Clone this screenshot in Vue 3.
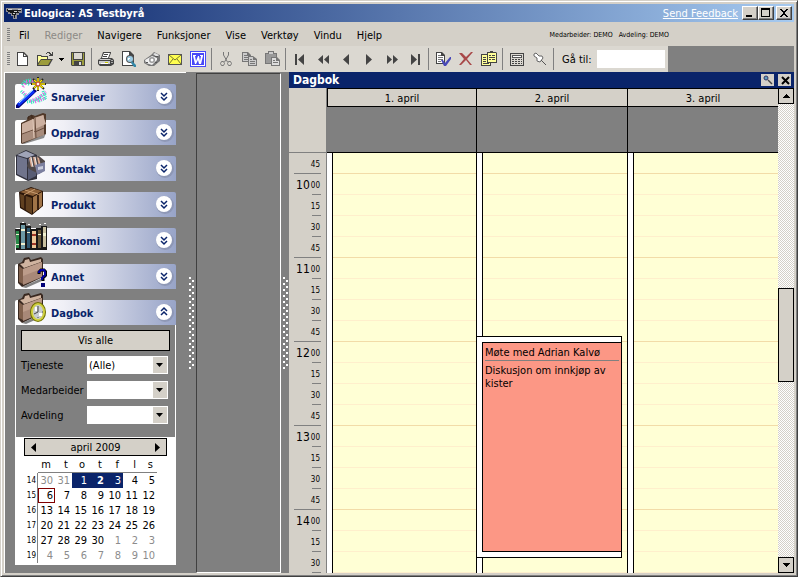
<script setup>
import { ref } from 'vue'

const menus = ['Fil', 'Rediger', 'Navigere', 'Funksjoner', 'Vise', 'Verktøy', 'Vindu', 'Hjelp']

const toolGroups = [
  [{ id: 'new', label: 'Ny' }, { id: 'open', label: 'Åpne' }, { id: 'drop', label: 'Åpne nylige' }, { id: 'save', label: 'Lagre' }],
  [{ id: 'print', label: 'Skriv ut' }, { id: 'preview', label: 'Forhåndsvis' }, { id: 'fax', label: 'Faks' }, { id: 'mail', label: 'E-post' }, { id: 'word', label: 'Word' }],
  [{ id: 'cut', label: 'Klipp ut' }, { id: 'copy', label: 'Kopier' }, { id: 'paste', label: 'Lim inn' }],
  [{ id: 'first', label: 'Første' }, { id: 'rewind', label: 'Spol tilbake' }, { id: 'prev', label: 'Forrige' }, { id: 'next', label: 'Neste' }, { id: 'forward', label: 'Spol frem' }, { id: 'last', label: 'Siste' }],
  [{ id: 'approve', label: 'Godkjenn' }, { id: 'delete', label: 'Slett' }, { id: 'duplicate', label: 'Dupliser' }],
  [{ id: 'calc', label: 'Kalkulator' }, { id: 'pin', label: 'Fest' }],
]

const sections = [
  { id: 'wand', label: 'Snarveier' },
  { id: 'case', label: 'Oppdrag' },
  { id: 'cabinet', label: 'Kontakt' },
  { id: 'box', label: 'Produkt' },
  { id: 'books', label: 'Økonomi' },
  { id: 'folder', label: 'Annet' },
  { id: 'diary', label: 'Dagbok', open: true },
]

const filters = [
  { id: 'tjeneste', label: 'Tjeneste', value: '(Alle)' },
  { id: 'medarbeider', label: 'Medarbeider', value: '' },
  { id: 'avdeling', label: 'Avdeling', value: '' },
]

const weekdays = ['m', 't', 'o', 't', 'f', 'l', 's']
const weeks = [14, 15, 16, 17, 18, 19].map((number, w) => ({
  number,
  days: weekdays.map((_, d) => {
    const n = w * 7 + d - 1
    const out = n < 1 || n > 30
    return {
      text: n < 1 ? 31 + n : n > 30 ? n - 30 : n,
      out,
      selected: n >= 1 && n <= 3,
      bold: n === 2,
      today: n === 6,
    }
  }),
}))

// Quarter-hour slots from 09:45 up to 14:30
const slots = []
for (let q = 39; q < 59; q++) {
  const m = (q % 4) * 15
  slots.push({ hour: m === 0 ? Math.floor(q / 4) : '', minute: m === 0 ? '00' : String(m), last: m === 45 })
}

const days = [
  { label: '1. april', events: [] },
  { label: '2. april', events: [{ start: 183, length: 222, title: 'Møte med Adrian Kalvø', text: 'Diskusjon om innkjøp av kister' }] },
  { label: '3. april', events: [] },
]

const goto = ref('')
</script>

<template>
  <div class="window">
    <header class="titlebar">
      <svg class="app-icon" viewBox="0 0 16 16" aria-hidden="true">
        <path d="M0 3h16v5h-3v2h-2v4H7v-3H5V9H2V7H0z" fill="#8c8c94" />
        <path d="M1 4h5v1h9v1h-3v1h1v1h-3v2H9v3H8v-3H6V8H4V7H2V6H1z" fill="#181818" />
        <path d="M2 4h4v1H2zM8 6h3v1H8zM7 8h2v1H7zM12 4h3v1h-3z" fill="#d0d0d0" />
      </svg>
      <h1>Eulogica: AS Testbyrå</h1>
      <a href="#feedback" class="feedback">Send Feedback</a>
      <div class="win-buttons">
        <button type="button" aria-label="Minimer"><svg viewBox="0 0 12 10"><path d="M2 7h6v2H2z" /></svg></button>
        <button type="button" aria-label="Maksimer"><svg viewBox="0 0 12 10"><path d="M1 0h9v9H1zM2 2v6h7V2z" fill-rule="evenodd" /></svg></button>
        <button type="button" aria-label="Lukk" class="close"><svg viewBox="0 0 12 10"><path d="M2 1h2v1h1v1h2V2h1V1h2v1H9v1H8v1H7v2h1v1h1v1h1v1H8V8H7V7H5v1H4v1H2V8h1V7h1V6h1V4H4V3H3V2H2z" /></svg></button>
      </div>
    </header>

    <nav class="menubar">
      <span class="grip"></span>
      <button v-for="m in menus" :key="m" type="button" :disabled="m === 'Rediger'">{{ m }}</button>
      <p class="status"><span>Medarbeider: DEMO</span><span>Avdeling: DEMO</span></p>
    </nav>

    <div class="toolrow">
      <div class="toolbar">
        <span class="grip"></span>
        <div v-for="(group, g) in toolGroups" :key="g" class="group">
          <button v-for="t in group" :key="t.id" type="button" :class="{ narrow: t.id === 'drop' }" :aria-label="t.label">
            <svg v-if="t.id === 'drop'" class="drop" viewBox="0 0 5 3"><path d="M0 0h5v1H0zM1 1h3v1H1zM2 2h1v1H2z" /></svg>
            <svg v-else class="ico" viewBox="0 0 16 16">
              <g v-if="t.id === 'new'">
                <path d="M3 1h7l4 4v10H3z" fill="#444" /><path d="M4 2h5v4h4v8H4z" fill="#fff" /><path d="M10 3v2h2z" fill="#fff" />
              </g>
              <g v-else-if="t.id === 'open'">
                <path d="M0 4h4l1 1h6v3h5l-4 7H0z" fill="#444" /><path d="M1 5h3v1h6v2H4l-3 4z" fill="#ffff9c" /><path d="M4 9h10l-3 5H1z" fill="#9c9c3c" />
                <path d="M9 2h1V1h3v1h1v1h1V1h1v4h-4V4h1V3h-1V2h-2v1H9z" fill="#444" />
              </g>
              <g v-else-if="t.id === 'save'">
                <path d="M1 1h14v14H2l-1-1z" fill="#444" /><path d="M2 2h1v7h10V2h1v12H2z" fill="#9c9c3c" /><path d="M4 2h8v6H4z" fill="#dbd8d1" /><path d="M4 10h8v4H4z" fill="#444" /><path d="M9 11h2v3H9z" fill="#ddd" />
              </g>
              <g v-else-if="t.id === 'print'">
                <path d="M5 1h8v1l-2 5h3l2 2v4l-3 2H2l-2-2V9l3-2z" fill="#444" /><path d="M6 2h6l-2 5H4z" fill="#fff" /><path d="M6 3h4v1H6zM5 5h4v1H5z" fill="#444" /><path d="M2 8h11l-1 1H1zM1 10h11v3H1z" fill="#ccc" /><path d="M3 12h7v1H3z" fill="#fff" /><path d="M7 11h3v1H7z" fill="#c8c800" /><path d="M13 9h2v1h-2zM13 11h2v1h-2z" fill="#aaa" />
              </g>
              <g v-else-if="t.id === 'preview'">
                <path d="M1 0h8l4 4v11H1z" fill="#444" /><path d="M2 1h6v4h4v9H2z" fill="#fff" /><circle cx="9" cy="8" r="4" fill="#555" /><circle cx="9" cy="8" r="3" fill="#9ccce4" /><path d="M7 7h2v1H8v1H7z" fill="#fff" /><path d="M11 10l4 4v2h-2l-3-4z" fill="#3488a8" />
              </g>
              <g v-else-if="t.id === 'fax'">
                <path d="M0 9l7-5 3-3 6 3v6l-6 5H5l-5-3z" fill="#777" /><path d="M1 9l7-4 5 2v2l-5 5-6-2z" fill="#f0f0f0" /><circle cx="8" cy="9" r="3" fill="#999" /><circle cx="8" cy="9" r="1.500" fill="#fff" /><path d="M9 3l2-1 4 2-2 2z" fill="#e4e4e4" /><path d="M2 11h2v1H2zM11 11h2v1h-2zM11 5h3v1h-3z" fill="#555" />
              </g>
              <g v-else-if="t.id === 'mail'">
                <path d="M1 3h14v11H1z" fill="#555" /><path d="M2 4h12v9H2z" fill="#ffff50" /><path d="M2 4l6 5 6-5M2 13l4-5M14 13l-4-5" fill="none" stroke="#777730" />
              </g>
              <g v-else-if="t.id === 'word'">
                <path d="M0 0h16v16H0z" fill="#4848f8" /><path d="M1 1h14v14H1z" fill="#fff" /><path d="M2 2h12v12H2z" fill="#4848f8" /><path d="M3 4h3v1H5l1 5 2-5h1l1 5 1-5h-1V4h3v1l-2 8H9L8 9l-2 4H5L3 5z" fill="#fff" />
              </g>
              <g v-else-if="t.id === 'cut'" fill="none" stroke="#777" stroke-width="1">
                <path d="M5.500 1v3l4 7M10.500 1v3l-4 7" /><path d="M3.500 10.500h2l1 2-1 2h-2l-1-2zM10.500 10.500h2l1 2-1 2h-2l-1-2z" />
              </g>
              <g v-else-if="t.id === 'copy'">
                <path d="M1 1h6l3 3v7H1z" fill="#777" /><path d="M2 2h4v3h3v5H2z" fill="#ccc" /><path d="M3 4h3v1H3zM3 6h5v1H3zM3 8h5v1H3z" fill="#777" /><path d="M7 5h5l4 3v7H7z" fill="#777" /><path d="M8 6h4v3h3v5H8z" fill="#ccc" /><path d="M9 8h2v1H9zM9 10h5v1H9zM9 12h5v1H9z" fill="#777" />
              </g>
              <g v-else-if="t.id === 'paste'">
                <path d="M1 2h3V0h6v2h3v11H1z" fill="#777" /><path d="M2 3h10v9H2z" fill="#999" /><path d="M5 1h4v2H5z" fill="#ccc" /><path d="M7 6h6l3 3v6H7z" fill="#777" /><path d="M8 7h4v3h3v4H8z" fill="#ddd" /><path d="M9 9h2v1H9zM9 11h5v1H9z" fill="#777" />
              </g>
              <path v-else-if="t.id === 'first'" d="M3 3h2v11H3zM12 3v11L6 8.500z" fill="#444" />
              <path v-else-if="t.id === 'rewind'" d="M8 4v9L3 8.500zM14 4v9L9 8.500z" fill="#444" />
              <path v-else-if="t.id === 'prev'" d="M11 3v11L5 8.500z" fill="#444" />
              <path v-else-if="t.id === 'next'" d="M5 3v11l6-5.500z" fill="#444" />
              <path v-else-if="t.id === 'forward'" d="M3 4v9l5-4.500zM9 4v9l5-4.500z" fill="#444" />
              <path v-else-if="t.id === 'last'" d="M4 3v11l6-5.500zM11 3h2v11h-2z" fill="#444" />
              <g v-else-if="t.id === 'approve'">
                <path d="M1 1h6l3 3v9H1z" fill="#444" /><path d="M2 2h4v3h3v7H2z" fill="#fff" /><path d="M3 4h3v1H3zM3 6h5v1H3zM3 8h5v1H3zM3 10h3v1H3z" fill="#777" /><path d="M6 9h2l2 3 5-6h1v2l-5 7H9z" fill="#4848b8" />
              </g>
              <path v-else-if="t.id === 'delete'" d="M1 2h3l4 4 5-5h2L9 8l5 6h-2L8 9l-5 5H1l5-6z" fill="#a84848" />
              <g v-else-if="t.id === 'duplicate'">
                <path d="M0 3h8l2 2v10H0z" fill="#444" /><path d="M1 4h8v10H1z" fill="#ffff98" /><path d="M6 1h3V0h3v1h3l1 1v10H6z" fill="#444" /><path d="M7 2h8v9H7z" fill="#ffff98" /><path d="M2 6h3v1H2zM2 8h3v1H2zM2 10h3v1H2zM2 12h6v1H2zM8 4h2v1H8zM11 4h3v1h-3zM8 6h6v1H8zM8 8h2v1H8zM11 8h3v1h-3z" fill="#444" />
              </g>
              <g v-else-if="t.id === 'calc'">
                <path d="M1 2h14v13H1z" fill="#444" /><path d="M2 3h12v11H2z" fill="#dbd8d1" /><path d="M3 4h10v3H3z" fill="#555" /><path d="M4 5h8v1H4z" fill="#fff" />
                <path d="M3 8h2v1H3zM6 8h2v1H6zM9 8h2v1H9zM12 8h1v1h-1zM3 10h2v1H3zM6 10h2v1H6zM9 10h2v1H9zM12 10h1v1h-1zM3 12h2v1H3zM6 12h2v1H6zM9 12h2v1H9zM12 12h1v1h-1z" fill="#444" />
              </g>
              <g v-else-if="t.id === 'pin'">
                <path d="M2 3l2-1 3 3 3 0 1 2-3 4-3-1v-3L2 5z" fill="#fff" stroke="#666" /><path d="M9 9l5 5" stroke="#555" fill="none" />
              </g>
            </svg>
          </button>
        </div>
        <label for="goto">Gå til:</label>
        <input id="goto" v-model="goto" type="text">
      </div>
    </div>

    <main class="work">
      <aside class="sidebar">
        <section v-for="s in sections" :key="s.id" class="section">
          <button type="button" class="section-head" :aria-expanded="!!s.open">
            <svg class="pic" viewBox="0 0 32 32" aria-hidden="true">
              <g v-if="s.id === 'wand'">
                <path d="M7 8l3-4 6-1M6 14l4 4 2 5M12 25l8-2 11-7M16 26l10-5M24 24l7-3M10 5l5 3M28 14l3 8" fill="none" stroke="#30e8c0" stroke-width="3" stroke-dasharray="1 1" />
                <path d="M8 10l3-5 7-1M8 15l5 5M15 24l8-3 8-6M20 25l10-4" fill="none" stroke="#f060e8" stroke-width="3" stroke-dasharray="1 2" />
                <path d="M1 28L19 12l3 2L4 31H1z" fill="#000078" /><path d="M3 28L19 14" stroke="#0830f8" stroke-width="3" /><path d="M4 26L18 13" stroke="#a0e8ff" />
                <path d="M23 0v14M16 7h15M18 2l11 10M18 12L28 2" stroke="#222" stroke-width="2" /><path d="M23 1v12M17 7h13M19 3l9 8M19 11l8-8" stroke="#ffe800" stroke-width="1.500" /><circle cx="23" cy="7" r="2" fill="#fff" stroke="#c02020" />
              </g>
              <g v-else-if="s.id === 'case'">
                <path d="M7 30l22-8 2-2-2 5-20 6z" fill="#444" opacity=".6" />
                <path d="M6 10l6-3 1-3 5-2 2 1 8-3 3 1v20L7 31l-1-1z" fill="#503828" />
                <path d="M7 11l22-9v20L7 30z" fill="#a88c7c" />
                <path d="M7 11l11-5v12L7 21zM19 5l9-3 3 9-11 5z" fill="#ccb0a0" />
                <path d="M7 21l11-4 2 2 9-4" fill="none" stroke="#684c3c" /><path d="M18 6l1 19" stroke="#e4ccbc" /><path d="M20 5l1 20" stroke="#684c3c" />
                <path d="M13 6v-2l4-2v3" fill="none" stroke="#382418" />
              </g>
              <g v-else-if="s.id === 'cabinet'">
                <path d="M1 6l10-5 11 5v24l-9 2L1 26z" fill="#30303c" /><path d="M2 6l9-4 9 4-8 3z" fill="#a0a4b8" /><path d="M2 7l10 3v20L2 25z" fill="#70748c" /><path d="M13 10l8-3v20l-8 4z" fill="#585c74" /><path d="M12 17l3-9 9-1 6 5v9l-6 4-10-5z" fill="#504848" /><path d="M14 9l2-1 2 9-2 1zM18 8l2 0 2 9-2 1zM22 8l2 1 2 8h-2z" fill="#d8a890" /><path d="M16 8l2 10M20 8l2 10" stroke="#eee" /><path d="M20 16l10-3v9l-8 4z" fill="#7c80a0" /><path d="M23 18l5-1v3l-5 1z" fill="#c8ccdc" />
              </g>
              <g v-else-if="s.id === 'box'">
                <path d="M4 7l12-5 12 4v15l-11 9L5 23z" fill="#281408" /><path d="M5 7l11-4 11 3-9 5z" fill="#8c6038" /><path d="M5 9l12 4v16L6 22z" fill="#604020" /><path d="M18 12l9-5v14l-9 7z" fill="#a07448" /><path d="M10 5l13 4M20 4L9 10" stroke="#c89c70" /><path d="M10 11v14M23 10v15" stroke="#382010" stroke-width="2" />
              </g>
              <g v-else-if="s.id === 'books'">
                <path d="M0 8h5V2h6v3h5v3h5V7h5V5h6v24H1z" fill="#181818" /><path d="M1 10h3v17H1z" fill="#288848" /><path d="M6 4h4v24H6z" fill="#6c98a4" /><path d="M12 7h3v20h-3z" fill="#305870" /><path d="M17 10h4v17h-4z" fill="#f0c898" /><path d="M23 9h3v18h-3z" fill="#685838" /><path d="M28 6h3v20h-3z" fill="#c8c0a0" /><path d="M1 13h3v1H1zM1 23h3v1H1zM6 8h4v2H6zM6 22h4v2H6zM12 11h3v1h-3zM23 13h3v1h-3zM28 12h3v3h-3z" fill="#f0f0d0" /><path d="M17 13h4v2h-4zM17 22h4v2h-4z" fill="#a03828" /><path d="M7 1h2v1H7zM13 3h2v1h-2zM24 3h2v1h-2zM29 2h2v1h-2z" fill="#fff" />
              </g>
              <g v-else>
                <path d="M7 30l18-8 4-2v3L11 31z" fill="#333" opacity=".6" />
                <path d="M3 7l4-2 2-4 5-1 2 3 10-3 2 2v18L7 30 3 26z" fill="#382820" />
                <path d="M5 7l4-1 1-3 4-1 1 3 11-3v3L9 11z" fill="#d0b4a0" /><path d="M4 9l4 3v15l-4-2z" fill="#80604c" />
                <path d="M8 12l19-7v15L8 28z" fill="#a88878" /><path d="M8 12l19-7-1 7-18 7z" fill="#bc9c8a" />
                <g v-if="s.id === 'folder'"><path d="M24 17v-2l2-2h3l2 2v3l-3 3v3" fill="none" stroke="#000" stroke-width="3" /><path d="M24 16v-1l2-2h3l1 2v3l-3 3v2" fill="none" stroke="#0000a0" stroke-width="2" /><path d="M26 26h4v4h-4z" fill="#000078" /></g>
                <g v-else><ellipse cx="23" cy="19" rx="8" ry="10" fill="#707000" /><ellipse cx="23" cy="19" rx="7" ry="9" fill="#d0d040" /><ellipse cx="23" cy="19" rx="5" ry="7" fill="#c8ccd0" /><path d="M23 13v6l-4 2M23 24v1M27 19h1" stroke="#444" fill="none" /><path d="M20 14h2v4h-2zM24 20h3v3h-3z" fill="#fff" /></g>
              </g>
            </svg>
            <span>{{ s.label }}</span>
            <svg class="chev" viewBox="0 0 19 19" aria-hidden="true">
              <circle cx="10" cy="10" r="9" fill="#8890ac" opacity=".7" /><circle cx="9" cy="9" r="8" fill="#fff" />
              <path :d="s.open ? 'M6 8l3-3 3 3M6 12l3-3 3 3' : 'M6 6l3 3 3-3M6 10l3 3 3-3'" fill="none" stroke="#0a246a" stroke-width="1.500" />
            </svg>
          </button>

          <div v-if="s.open" class="section-body">
            <form class="filters" @submit.prevent>
              <button type="button" class="show-all">Vis alle</button>
              <div v-for="f in filters" :key="f.id" class="field">
                <label :for="f.id">{{ f.label }}</label>
                <span class="combo">
                  <select :id="f.id"><option>{{ f.value }}</option></select>
                </span>
              </div>
            </form>
            <div class="month">
              <div class="month-head">
                <button type="button" aria-label="Forrige måned"><svg viewBox="0 0 5 9"><path d="M5 0v9L0 4.500z" /></svg></button>
                <span>april 2009</span>
                <button type="button" aria-label="Neste måned"><svg viewBox="0 0 5 9"><path d="M0 0v9l5-4.500z" /></svg></button>
              </div>
              <table>
                <thead>
                  <tr><td></td><th v-for="(d, i) in weekdays" :key="i" scope="col">{{ d }}</th></tr>
                </thead>
                <tbody>
                  <tr v-for="w in weeks" :key="w.number">
                    <th scope="row">{{ w.number }}</th>
                    <td v-for="(d, i) in w.days" :key="i" :class="{ out: d.out, selected: d.selected, bold: d.bold, today: d.today }">{{ d.text }}</td>
                  </tr>
                </tbody>
              </table>
            </div>
          </div>
        </section>
      </aside>
      <div class="splitter"><span></span></div>
      <div class="pane"></div>
      <div class="splitter right"><span></span></div>

      <section class="diary">
        <header class="diary-title">
          <h2>Dagbok</h2>
          <button type="button" aria-label="Fest panel"><svg viewBox="0 0 12 12"><circle cx="4" cy="4" r="2" fill="#60a0c0" stroke="#336" /><path d="M6 6l4 4" stroke="#444" stroke-width="1.500" /></svg></button>
          <button type="button" aria-label="Lukk panel"><svg viewBox="0 0 12 12"><path d="M3 3l7 7M10 3l-7 7" stroke="#000" stroke-width="2" /></svg></button>
        </header>
        <div class="diary-main">
          <div class="schedule">
            <div class="corner"></div>
            <div class="day-heads">
              <div v-for="d in days" :key="d.label" class="day-head"><h3>{{ d.label }}</h3></div>
            </div>
            <div class="times">
              <div v-for="(s, i) in slots" :key="i" class="time" :class="{ last: s.last }">
                <b>{{ s.hour }}</b><small>{{ s.minute }}</small>
              </div>
            </div>
            <div class="day-cols">
              <div v-for="d in days" :key="d.label" class="day-col">
                <div v-for="(s, i) in slots" :key="i" class="slot" :class="{ last: s.last }"></div>
                <article v-for="e in d.events" :key="e.title" class="event" :style="{ top: e.start + 'px', height: e.length + 'px' }">
                  <div class="event-body">
                    <h4>{{ e.title }}</h4>
                    <p>{{ e.text }}</p>
                  </div>
                </article>
              </div>
            </div>
          </div>
          <div class="scrollbar">
            <button type="button" aria-label="Rull opp"><svg viewBox="0 0 7 4"><path d="M3 0h1v1h1v1h1v1h1v1H0V3h1V2h1V1h1z" /></svg></button>
            <div class="track"><div class="thumb"></div></div>
            <button type="button" aria-label="Rull ned"><svg viewBox="0 0 7 4"><path d="M3 4h1V3h1V2h1V1h1V0H0v1h1v1h1v1h1z" /></svg></button>
          </div>
        </div>
      </section>
    </main>
  </div>
</template>

<style>
body {
  margin: 0;
}
</style>

<style scoped>
* {
  box-sizing: border-box;
}

.window {
  display: flex;
  flex-direction: column;
  height: 100vh;
  padding: 3px;
  border: 1px solid;
  border-color: #d4d0c8 #404040 #404040 #d4d0c8;
  background: #d4d0c8;
  box-shadow: inset 1px 1px #fff, inset -1px -1px #808080;
  color: #000;
  font: 11px/13px "DejaVu Sans Condensed", "Noto Sans", sans-serif;
  overflow: hidden;
}

button {
  display: flex;
  align-items: center;
  justify-content: center;
  padding: 0;
  border: 0;
  border-radius: 0;
  background: none;
  color: inherit;
  font: inherit;
}

h1, h2, h3, h4, p {
  margin: 0;
  font: inherit;
}

svg {
  display: block;
  flex: none;
}

.titlebar {
  display: flex;
  align-items: center;
  flex: none;
  height: 18px;
  padding: 0 2px;
  background: linear-gradient(90deg, #0a246a, #a6caf0);
  color: #fff;
}

.app-icon {
  width: 16px;
  height: 16px;
  margin-right: 2px;
}

.titlebar h1 {
  flex: 1;
  font-weight: bold;
}

.feedback {
  margin-right: 4px;
  color: #fff;
}

.win-buttons {
  display: flex;
}

.win-buttons button {
  width: 16px;
  height: 14px;
  border: 1px solid;
  border-color: #fff #404040 #404040 #fff;
  background: #d4d0c8;
  box-shadow: inset -1px -1px #808080;
}

.win-buttons .close {
  margin-left: 2px;
}

.win-buttons svg {
  width: 12px;
  height: 10px;
}

.menubar {
  display: flex;
  align-items: center;
  flex: none;
  gap: 15px;
  height: 24px;
  padding: 2px 0 0 3px;
}

.menubar .grip {
  margin-right: -6px;
}

.menubar button:disabled {
  color: #8c8a86;
}

.status {
  display: flex;
  gap: 6px;
  margin-left: auto;
  padding-right: 125px;
  font-size: 7px;
  white-space: nowrap;
}

.grip {
  flex: none;
  width: 3px;
  height: 14px;
  background: repeating-linear-gradient(#808080 0 1px, transparent 1px 2px);
}

.toolrow {
  flex: none;
  background: #808080;
}

.toolbar {
  display: flex;
  align-items: center;
  width: max-content;
  height: 26px;
  padding: 0 3px;
  background: #dbd8d1;
}

.group {
  display: flex;
  align-items: center;
}

.group::after {
  content: "";
  width: 1px;
  height: 22px;
  margin: 0 2px;
  background: #808080;
}

.group button {
  width: 23px;
  height: 22px;
}

.group .narrow {
  width: 10px;
}

.ico {
  width: 16px;
  height: 16px;
}

.drop {
  width: 5px;
  height: 3px;
}

.toolbar label {
  margin: 0 5px 0 6px;
}

.toolbar input {
  width: 68px;
  height: 18px;
  padding: 0 2px;
  border: 0;
  background: #fff;
  font: inherit;
}

.work {
  display: flex;
  flex: 1;
  min-height: 0;
  background: #808080;
}

.sidebar {
  flex: none;
  width: 182px;
  padding: 11px 10px 0;
  border: 1px solid #fff;
  border-width: 1px 0 0 1px;
}

.section {
  margin-bottom: 11px;
}

.section-head {
  justify-content: flex-start;
  width: 161px;
  height: 25px;
  border-radius: 2px 2px 0 0;
  background: linear-gradient(90deg, #fff, #f0f0f6 30%, #98a4c8);
  color: #0a246a;
  font-weight: bold;
}

.section-head span {
  padding-top: 1px;
}

.pic {
  width: 32px;
  height: 32px;
  margin: -8px 4px 0 0;
}

.chev {
  width: 19px;
  height: 19px;
  margin: 0 2px 0 auto;
}

.section-body {
  width: 161px;
  background: #fff;
}

.filters {
  display: flex;
  flex-direction: column;
  gap: 7px;
  margin: 0 1px;
  padding: 5px 5px 13px 5px;
  background: #808080;
}

.show-all {
  height: 21px;
  margin-bottom: -2px;
  border: 1px solid #000;
  background: #d4d0c8;
}

.field {
  display: flex;
  align-items: center;
  justify-content: space-between;
  height: 18px;
  padding-right: 2px;
}

.combo {
  position: relative;
  width: 81px;
  height: 18px;
}

.combo select {
  width: 100%;
  height: 100%;
  padding: 0 2px;
  border: 0;
  border-radius: 0;
  background: #fff;
  color: #000;
  font: inherit;
  appearance: none;
}

.combo::after,
.combo::before {
  content: "";
  position: absolute;
  top: 1px;
  right: 1px;
  width: 14px;
  height: 16px;
  background: #d4d0c8;
  pointer-events: none;
}

.combo::after {
  top: 7px;
  right: 5px;
  width: 7px;
  height: 4px;
  background: #000;
  clip-path: polygon(0 0, 100% 0, 50% 100%);
}

.month {
  padding: 1px 9px 2px;
}

.month-head {
  display: flex;
  align-items: center;
  justify-content: space-between;
  height: 18px;
  padding: 0 6px;
  border: 1px solid #000;
  background: #d4d0c8;
}

.month-head svg {
  width: 5px;
  height: 9px;
}

.month table {
  border-collapse: separate;
  border-spacing: 0;
  table-layout: fixed;
  width: 133px;
  line-height: 13px;
}

.month th,
.month td {
  width: 17px;
  height: 15px;
  padding: 0 2px 0 0;
  font-weight: normal;
  text-align: right;
}

.month tr > :first-child {
  width: 14px;
  padding-right: 1px;
  border-right: 1px solid #808080;
  font-size: 8px;
}

.month thead tr > :first-child {
  border-right: 0;
}

.month thead th {
  height: 17px;
  padding-right: 4px;
  border-bottom: 1px solid #808080;
}

.month .out {
  color: #8c8c8c;
}

.month .selected {
  background: #0a246a;
  color: #fff;
}

.month .bold {
  font-weight: bold;
}

.month .today {
  box-shadow: inset 0 0 0 1px #800000;
}

.splitter {
  display: flex;
  align-items: center;
  flex: none;
  width: 10px;
  padding-left: 3px;
}

.splitter.right {
  width: 8px;
  padding-left: 2px;
}

/* Two staggered columns of grip dots */
.splitter span {
  width: 5px;
  height: 92px;
  background:
    repeating-linear-gradient(#fff 0 2px, transparent 2px 6px) 0 0 / 2px 100% no-repeat,
    repeating-linear-gradient(transparent 0 3px, #fff 3px 5px, transparent 5px 6px) 3px 0 / 2px 100% no-repeat;
}

.pane {
  flex: none;
  width: 85px;
  margin-top: 1px;
  border: 1px solid;
  border-color: #404040 #fff #fff #404040;
}

.diary {
  display: flex;
  flex: 1;
  flex-direction: column;
  min-width: 0;
}

.diary-title {
  display: flex;
  align-items: center;
  flex: none;
  gap: 4px;
  height: 16px;
  padding: 0 3px 0 4px;
  background: #0a246a;
  color: #fff;
}

.diary-title h2 {
  flex: 1;
  padding-top: 1px;
  font-size: 12px;
  font-weight: bold;
}

.diary-title button {
  width: 13px;
  height: 12px;
  background: #d4d0c8;
}

.diary-title svg {
  width: 12px;
  height: 12px;
}

.diary-main {
  display: flex;
  flex: 1;
  min-height: 0;
}

.schedule {
  display: grid;
  flex: 1;
  grid-template-columns: 38px 1fr;
  grid-template-rows: 65px 1fr;
  min-width: 0;
  overflow: hidden;
}

.corner,
.times {
  border-right: 1px solid #808080;
  background: #d4d0c8;
}

.corner {
  border-bottom: 1px solid #808080;
}

.day-heads,
.day-cols {
  display: grid;
  grid-template-columns: 149fr 151fr 151fr;
}

.day-head {
  border-bottom: 1px solid #000;
  border-left: 1px solid #000;
}

.day-head:first-child {
  border-left: 0;
}

.day-head h3 {
  height: 19px;
  border: 1px solid #000;
  border-width: 1px 0;
  background: #d4d0c8;
  line-height: 19px;
  text-align: center;
}

.day-head:first-child h3 {
  border-left-width: 1px;
}

.times,
.day-cols {
  min-height: 0;
  overflow: hidden;
}

.time {
  display: flex;
  align-items: center;
  justify-content: flex-end;
  gap: 1px;
  position: relative;
  height: 21px;
  padding: 2px 6px 0 0;
}

.time::after {
  content: "";
  position: absolute;
  right: 5px;
  bottom: 0;
  width: 9px;
  height: 1px;
  background: #808080;
}

.time.last::after {
  width: 27px;
}

.time b {
  font-size: 12px;
  font-weight: normal;
}

.time small {
  font-size: 8px;
}

.day-col {
  position: relative;
  border-left: 1px solid #000;
  background: linear-gradient(90deg, #fff 5px, #000 5px 6px, #ffffd5 6px);
}

.day-col:first-child {
  border-left: 0;
}

.slot {
  height: 21px;
  margin-left: 6px;
  border-bottom: 1px solid #ffefcc;
}

.slot.last {
  border-bottom-color: #f2dca8;
}

.event {
  position: absolute;
  left: -1px;
  right: 5px;
  display: flex;
  padding: 5px 0;
  border: 1px solid #000;
  background: #fff;
}

.event-body {
  flex: 1;
  margin-left: 5px;
  padding: 3px 2px;
  border: 1px solid #000;
  border-right: 0;
  background: #fc9785;
}

.event h4 {
  padding-bottom: 1px;
  border-bottom: 1px solid #808080;
}

.event p {
  padding-top: 3px;
}

.scrollbar {
  display: flex;
  flex: none;
  flex-direction: column;
  width: 16px;
}

.scrollbar button {
  width: 16px;
  height: 16px;
  border: 1px solid #000;
  background: #d4d0c8;
}

.scrollbar svg {
  width: 7px;
  height: 4px;
}

.track {
  flex: 1;
  padding-top: 184px;
  background: repeating-conic-gradient(#fff 0 25%, #d4d0c8 0 50%) 0 0 / 2px 2px;
}

.thumb {
  height: 94px;
  border: 1px solid #000;
  background: #d4d0c8;
}
</style>
